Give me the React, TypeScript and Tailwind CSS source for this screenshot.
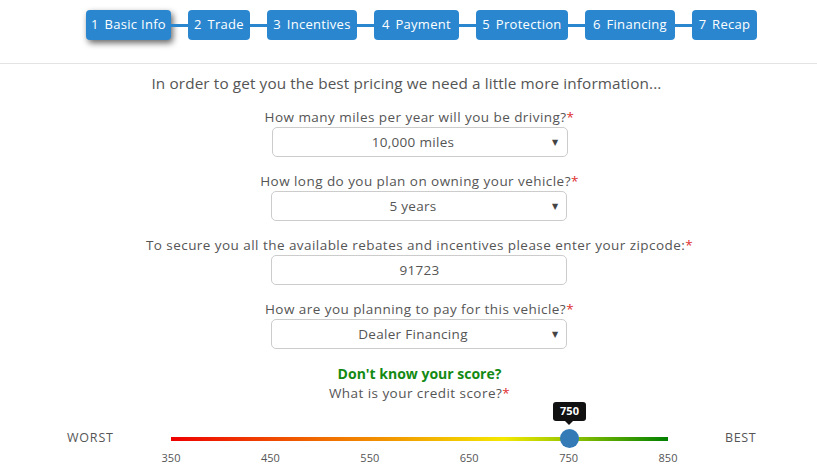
const steps = [
  { name: "Basic Info", w: "w-[85px]" },
  { name: "Trade", w: "w-[62px]" },
  { name: "Incentives", w: "w-[90px]" },
  { name: "Payment", w: "w-[85px]" },
  { name: "Protection", w: "w-[92px]" },
  { name: "Financing", w: "w-[90px]" },
  { name: "Recap", w: "w-[65px]" },
];

function Select({ value, arrow = true }: { value: string; arrow?: boolean }) {
  return (
    <div
      className={`relative w-[296px] h-[30px] border border-[#cccccc] rounded-[5px] bg-white flex items-center justify-center text-[13.5px] tracking-[0.3px] text-[#555] ${
        arrow ? "pr-[13px]" : ""
      }`}
    >
      {value}
      {arrow && (
        <span className="absolute right-[8px] top-[8px] text-[8px] text-[#444]">▼</span>
      )}
    </div>
  );
}

function Field({ label, value, arrow }: { label: string; value: string; arrow?: boolean }) {
  return (
    <div className="flex flex-col items-center">
      <div className="text-[13.5px] tracking-[0.45px] text-[#555] leading-[18px] mb-[1px]">
        {label}
        <span className="text-[#e03030]">*</span>
      </div>
      <Select value={value} arrow={arrow} />
    </div>
  );
}

export default function App() {
  const ticks = [350, 450, 550, 650, 750, 850];
  return (
    <div className="w-[817px] h-[469px] bg-white overflow-hidden" style={{ fontFamily: '"Open Sans", "DejaVu Sans", sans-serif' }}>
      <div className="h-[64px] border-b border-[#e3e3e3] flex items-start pl-[86px] pt-[10px]">
        {steps.map((s, i) => (
          <div key={s.name} className="flex items-center">
            {i > 0 && <div className="w-[17px] h-[3px] bg-[#2a87cf]" />}
            <div
              className={`${s.w} h-[30px] rounded-[4px] bg-[#2a87cf] text-white text-[13px] whitespace-nowrap flex items-center justify-center gap-[6px] ${
                i === 0 ? "shadow-[2px_3px_6px_rgba(0,0,0,0.6)]" : ""
              }`}
            >
              <span>{i + 1}</span>
              <span className="tracking-[0.3px]">{s.name}</span>
            </div>
          </div>
        ))}
      </div>

      <div className="text-center text-[15.3px] tracking-[0.12px] text-[#555] mt-[9px] leading-[20px] pr-[4px]">
        In order to get you the best pricing we need a little more information...
      </div>

      <div className="flex flex-col items-center gap-[15px] mt-[15px] pl-[22px]">
        <Field label="How many miles per year will you be driving?" value="10,000 miles" />
        <Field label="How long do you plan on owning your vehicle?" value="5 years" />
        <Field
          label="To secure you all the available rebates and incentives please enter your zipcode:"
          value="91723"
          arrow={false}
        />
        <Field label="How are you planning to pay for this vehicle?" value="Dealer Financing" />
      </div>

      <div className="flex flex-col items-center mt-[15px] pl-[22px]">
        <div className="text-[14px] font-bold text-[#138a13] leading-[19px]">Don't know your score?</div>
        <div className="text-[13.5px] tracking-[0.45px] text-[#555] leading-[18px] mt-[1px]">
          What is your credit score?<span className="text-[#e03030]">*</span>
        </div>
      </div>

      <div className="flex items-start mt-[9px]">
        <div className="w-[171px] pl-[67px] pt-[20px] text-[12.5px] tracking-[0.8px] text-[#555] leading-[14px]">WORST</div>
        <div className="w-[497px] flex flex-col">
          <div className="relative h-[40px]">
            <div
              className="absolute left-0 right-0 top-[26px] h-[4px]"
              style={{
                background:
                  "linear-gradient(to right, #ee0000 0%, #f06a00 30%, #f29a00 45%, #f4e800 67%, #a6cc00 78%, #008000 100%)",
              }}
            />
            <div className="absolute left-[389px] top-[18px] w-[19px] h-[19px] rounded-full bg-[#337ab7]" />
            <div className="absolute left-[382px] top-[-9px] w-[33px] h-[19px] rounded-[3px] bg-[#111] text-white text-[11px] font-bold flex items-center justify-center">
              750
            </div>
            <div className="absolute left-[394px] top-[10px] w-0 h-0 border-l-[4px] border-r-[4px] border-t-[4px] border-l-transparent border-r-transparent border-t-[#111]" />
          </div>
          <div className="relative h-[16px] text-[11px] text-[#555]">
            {ticks.map((t, i) => (
              <span
                key={t}
                className="absolute top-[1px] -translate-x-1/2 leading-[12px]"
                style={{ left: `${i * 99.4}px` }}
              >
                {t}
              </span>
            ))}
          </div>
        </div>
        <div className="pl-[57px] pt-[20px] text-[12.5px] tracking-[0.6px] text-[#555] leading-[14px]">BEST</div>
      </div>
    </div>
  );
}
